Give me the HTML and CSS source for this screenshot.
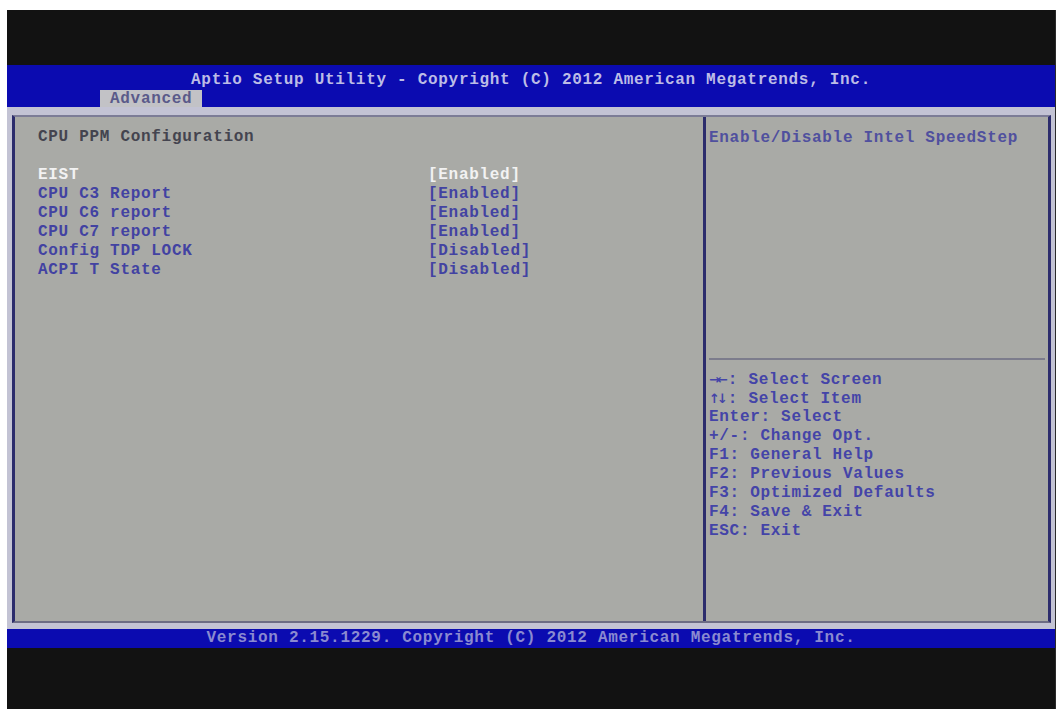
FILE: index.html
```html
<!DOCTYPE html>
<html>
<head>
<meta charset="utf-8">
<link rel="stylesheet" href="styles.css">
</head>
<body>
<div class="screen">
  <div class="top-black"></div>
  <div class="titlebar">
    <div class="title">Aptio Setup Utility - Copyright (C) 2012 American Megatrends, Inc.</div>
    <div class="tabs"><span class="tab">Advanced</span></div>
  </div>
  <div class="main">
    <div class="panels">
      <div class="left">
        <div class="row heading">CPU PPM Configuration</div>
        <div class="row blank"></div>
        <div class="row item selected"><span class="label">EIST</span><span class="value">[Enabled]</span></div>
        <div class="row item"><span class="label">CPU C3 Report</span><span class="value">[Enabled]</span></div>
        <div class="row item"><span class="label">CPU C6 report</span><span class="value">[Enabled]</span></div>
        <div class="row item"><span class="label">CPU C7 report</span><span class="value">[Enabled]</span></div>
        <div class="row item"><span class="label">Config TDP LOCK</span><span class="value">[Disabled]</span></div>
        <div class="row item"><span class="label">ACPI T State</span><span class="value">[Disabled]</span></div>
      </div>
      <div class="right">
        <div class="help-desc">Enable/Disable Intel SpeedStep</div>
        <div class="separator"></div>
        <div class="keys">
          <div class="row"><span class="arrow">→←</span>: Select Screen</div>
          <div class="row"><span class="arrow">↑↓</span>: Select Item</div>
          <div class="row">Enter: Select</div>
          <div class="row">+/-: Change Opt.</div>
          <div class="row">F1: General Help</div>
          <div class="row">F2: Previous Values</div>
          <div class="row">F3: Optimized Defaults</div>
          <div class="row">F4: Save &amp; Exit</div>
          <div class="row">ESC: Exit</div>
        </div>
      </div>
    </div>
  </div>
  <div class="footer">Version 2.15.1229. Copyright (C) 2012 American Megatrends, Inc.</div>
  <div class="bottom-black"></div>
</div>
</body>
</html>
```

FILE: styles.css
```css
html, body {
  margin: 0;
  padding: 0;
  background: #ffffff;
}

body {
  font-family: "Liberation Mono", "DejaVu Sans Mono", monospace;
  font-size: 16px;
  font-weight: bold;
  letter-spacing: 0.7px;
}

.screen {
  margin: 10px 0 0 7px;
  width: 1048px;
  height: 699px;
  background: #131313;
  display: flex;
  flex-direction: column;
  border-right: 1px solid #2a2a2a;
}

.top-black {
  height: 55px;
  background: #121212;
}

.titlebar {
  height: 42px;
  background: #0b0bb0;
  display: flex;
  flex-direction: column;
}

.title {
  padding-top: 6px;
  height: 18px;
  line-height: 18px;
  text-align: center;
  color: #bcbce6;
  white-space: nowrap;
}

.tabs {
  margin-top: 1px;
  padding-left: 93px;
  display: flex;
}

.tab {
  height: 17px;
  line-height: 18px;
  padding: 0 10px;
  background: #c2c2c6;
  color: #5a5a8a;
}

.main {
  background: #c3c3d4;
  padding: 8px 4px 6px 5px;
}

.panels {
  display: flex;
  height: 504px;
  background: #a9aaa6;
  border-top: 2px solid #7c7c96;
  border-bottom: 2px solid #6c6c84;
  border-left: 3px solid #2c2c6c;
  border-right: 3px solid #2c2c6c;
}

.row {
  height: 19px;
  line-height: 19px;
  white-space: nowrap;
}

.left {
  width: 688px;
  padding: 11px 0 0 23px;
  box-sizing: border-box;
  color: #4242a2;
}

.heading {
  color: #44444f;
}

.item {
  display: flex;
}

.label {
  width: 390px;
}

.selected {
  color: #f2f2f2;
}

.right {
  flex: 1;
  border-left: 3px solid #2c2c6c;
  display: flex;
  flex-direction: column;
  color: #4444a8;
}

.help-desc {
  height: 229px;
  padding: 12px 0 0 3px;
  line-height: 19px;
  color: #50509e;
  white-space: nowrap;
}

.separator {
  margin: 0 3px 0 3px;
  height: 2px;
  background: #7c7c8c;
}

.keys {
  padding: 10px 0 0 3px;
}

.arrow {
  font-family: "DejaVu Sans", sans-serif;
  font-size: 13px;
  letter-spacing: -3px;
  margin-right: 3px;
}

.footer {
  height: 19px;
  line-height: 19px;
  background: #0b0bb0;
  color: #8a8ad0;
  text-align: center;
  white-space: nowrap;
}

.bottom-black {
  flex: 1;
  background: #121212;
}
```
